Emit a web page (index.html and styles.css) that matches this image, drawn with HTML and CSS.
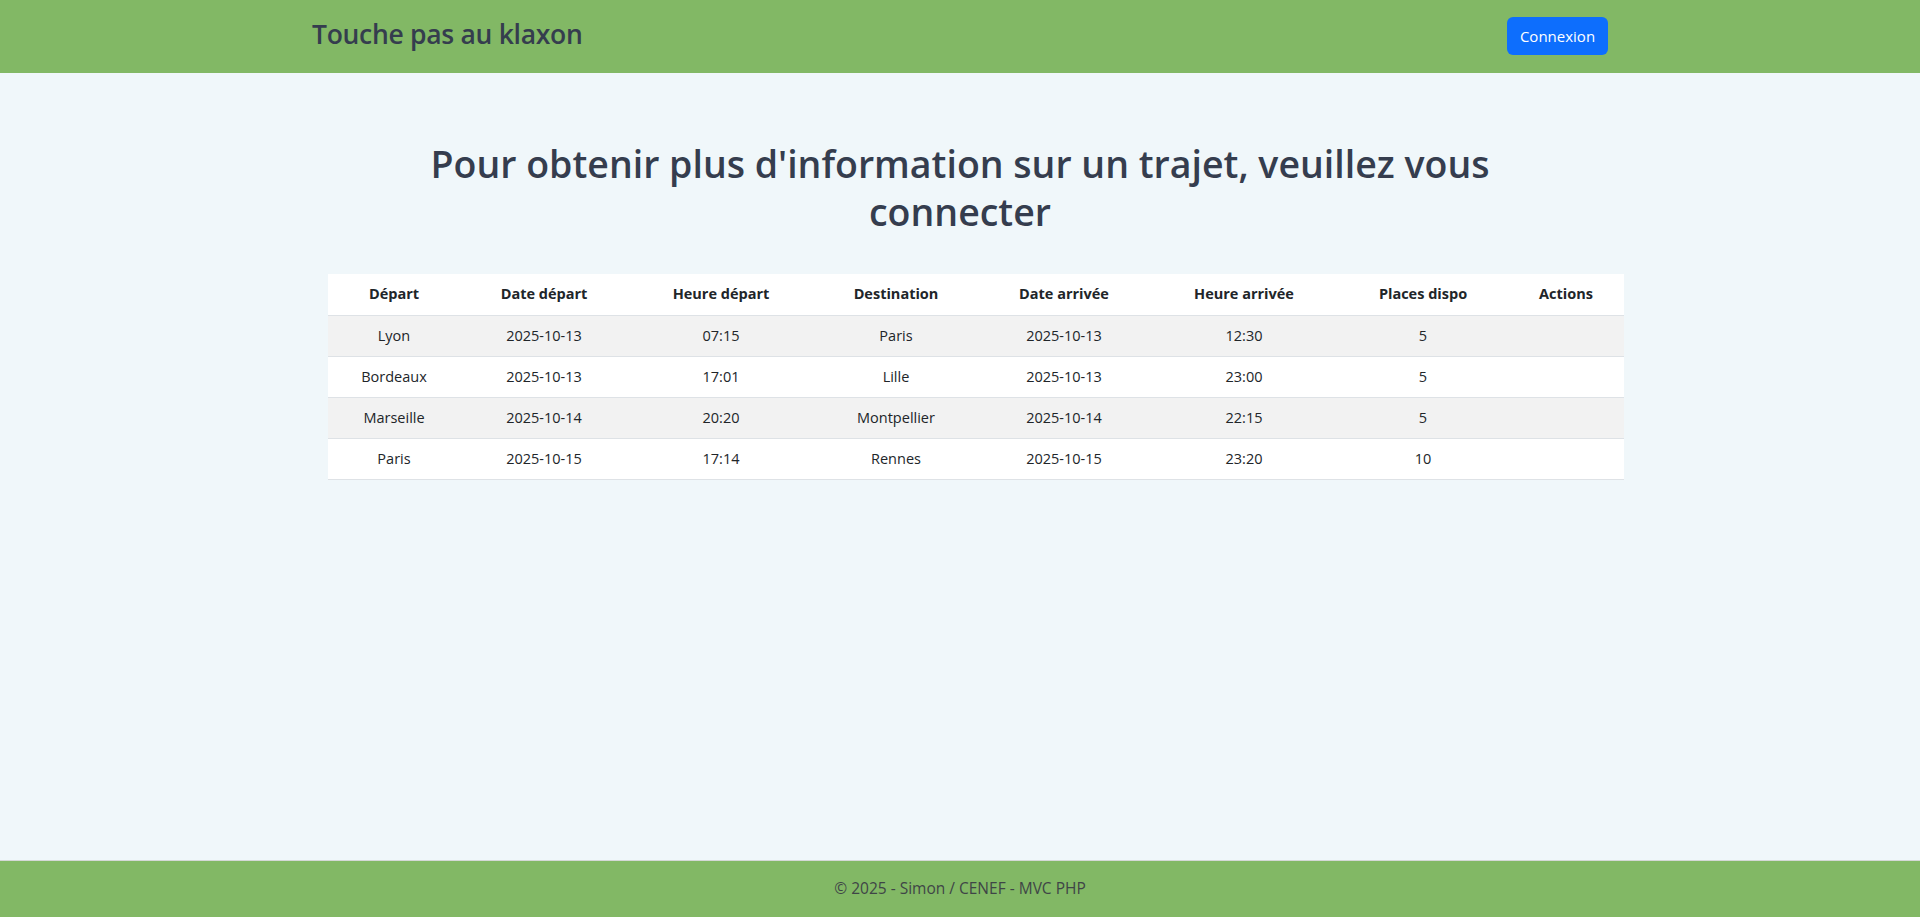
FILE: index.html
```html
<!DOCTYPE html>
<html lang="fr">
<head>
<meta charset="utf-8">
<title>Touche pas au klaxon</title>
<link rel="stylesheet" href="styles.css">
</head>
<body>
<header class="navbar">
  <div class="container nav-inner">
    <a class="brand" href="#">Touche pas au klaxon</a>
    <a class="btn-primary" href="#">Connexion</a>
  </div>
</header>
<main class="container main">
  <h1 class="title">Pour obtenir plus d'information sur un trajet, veuillez vous connecter</h1>
  <div class="table-wrap">
    <table class="trips">
      <colgroup>
        <col class="c1"><col class="c2"><col class="c3"><col class="c4"><col class="c5"><col class="c6"><col class="c7"><col class="c8">
      </colgroup>
      <thead>
        <tr><th>Départ</th><th>Date départ</th><th>Heure départ</th><th>Destination</th><th>Date arrivée</th><th>Heure arrivée</th><th>Places dispo</th><th>Actions</th></tr>
      </thead>
      <tbody>
        <tr><td>Lyon</td><td>2025-10-13</td><td>07:15</td><td>Paris</td><td>2025-10-13</td><td>12:30</td><td>5</td><td></td></tr>
        <tr><td>Bordeaux</td><td>2025-10-13</td><td>17:01</td><td>Lille</td><td>2025-10-13</td><td>23:00</td><td>5</td><td></td></tr>
        <tr><td>Marseille</td><td>2025-10-14</td><td>20:20</td><td>Montpellier</td><td>2025-10-14</td><td>22:15</td><td>5</td><td></td></tr>
        <tr><td>Paris</td><td>2025-10-15</td><td>17:14</td><td>Rennes</td><td>2025-10-15</td><td>23:20</td><td>10</td><td></td></tr>
      </tbody>
    </table>
  </div>
</main>
<footer class="footer">
  <p class="footer-text">© 2025 - Simon / CENEF - MVC PHP</p>
</footer>
</body>
</html>
```
FILE: styles.css
```css
* { box-sizing: border-box; }
html, body { height: 100%; }
body {
  margin: 0;
  background: #f0f7fa;
  font-family: "Open Sans", "Noto Sans", "Liberation Sans", sans-serif;
  font-size: 16px;
  line-height: 1.5;
  color: #212529;
  display: flex;
  flex-direction: column;
  min-height: 100vh;
}
.container {
  width: 100%;
  max-width: 1320px;
  margin: 0 auto;
  padding: 0 12px;
}
.navbar {
  background: #82b865;
  height: 73px;
  flex-shrink: 0;
}
.nav-inner {
  height: 100%;
  display: flex;
  align-items: center;
  justify-content: space-between;
}
.brand {
  color: #353d4e;
  text-decoration: none;
  font-size: 26.5px;
  font-weight: 600;
  letter-spacing: -0.3px;
  line-height: 1.2;
  margin-top: -3px;
}
.btn-primary {
  display: inline-block;
  background: #0d6efd;
  color: #fff;
  text-decoration: none;
  font-size: 15px;
  line-height: 24px;
  padding: 7px 11px;
  border-radius: 6px;
  width: 101px;
  height: 38px;
  text-align: center;
  margin-top: -1px;
}
.main {
  flex: 1;
}
.title {
  text-align: center;
  color: #353d4e;
  font-size: 37.5px;
  font-weight: 600;
  line-height: 48px;
  margin: 67px 0 38px;
  padding: 0 110px;
}
.table-wrap {
  margin-left: 16px;
  width: 1296px;
}
.trips {
  width: 1296px;
  border-collapse: collapse;
  table-layout: fixed;
  background: #fff;
  font-size: 14.5px;
}
.c1 { width: 132px; }
.c2 { width: 168px; }
.c3 { width: 186px; }
.c4 { width: 164px; }
.c5 { width: 172px; }
.c6 { width: 188px; }
.c7 { width: 170px; }
.c8 { width: 116px; }
.trips th, .trips td {
  text-align: center;
  padding: 8px;
  height: 41px;
  border-bottom: 1px solid #dee2e6;
  color: #212529;
  white-space: nowrap;
}
.trips th { font-weight: 700; }
.trips tbody tr:nth-child(odd) td { background: #f2f2f2; }
.footer {
  background: #82b865;
  border-top: 1px solid #d4d8d6;
  height: 57px;
  display: flex;
  align-items: center;
  justify-content: center;
  flex-shrink: 0;
}
.footer-text {
  margin: 0;
  color: #3f4547;
  font-size: 15.5px;
}
```
